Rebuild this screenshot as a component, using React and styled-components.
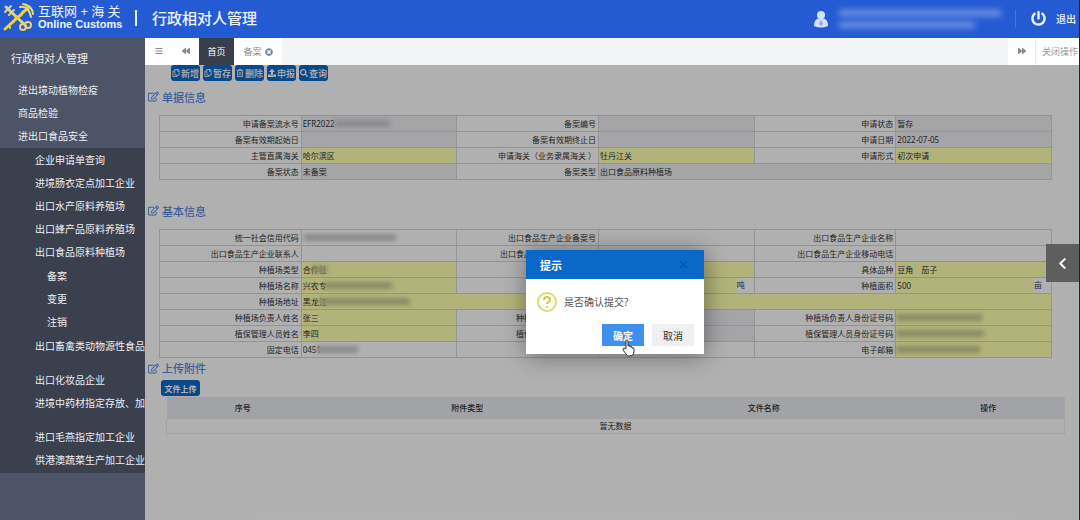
import React from 'react';
import styled, { createGlobalStyle } from 'styled-components';
import { FaBars, FaBackward, FaForward, FaTimesCircle, FaPowerOff, FaRegTrashAlt, FaUpload, FaSearch, FaRegEdit, FaRegCopy, FaChevronLeft } from 'react-icons/fa';

const menu = ['进出境动植物检疫', '商品检验', '进出口食品安全'];

const subMenu = [
  { name: '企业申请单查询' },
  { name: '进境肠衣定点加工企业' },
  { name: '出口水产原料养殖场' },
  { name: '出口蜂产品原料养殖场' },
  { name: '出口食品原料种植场', children: ['备案', '变更', '注销'] },
  { name: '出口畜禽类动物源性食品企业', tall: true },
  { name: '出口化妆品企业' },
  { name: '进境中药材指定存放、加工企业', tall: true },
  { name: '进口毛燕指定加工企业' },
  { name: '供港澳蔬菜生产加工企业' },
];

const tools = [
  { name: '新增', icon: <FaRegCopy /> },
  { name: '暂存', icon: <FaRegCopy /> },
  { name: '删除', icon: <FaRegTrashAlt /> },
  { name: '申报', icon: <FaUpload /> },
  { name: '查询', icon: <FaSearch /> },
];

const billFields = [
  { label: '申请备案流水号', value: 'EFR2022', tone: 'grey', hide: [32, 56] },
  { label: '备案编号', tone: 'grey' },
  { label: '申请状态', value: '暂存', tone: 'grey' },
  { label: '备案有效期起始日', tone: 'grey' },
  { label: '备案有效期终止日', tone: 'grey' },
  { label: '申请日期', value: '2022-07-05', tone: 'grey' },
  { label: '主管直属海关', value: '哈尔滨区', tone: 'yellow' },
  { label: '申请海关（业务隶属海关 ）', value: '牡丹江关', tone: 'yellow' },
  { label: '申请形式', value: '初次申请', tone: 'yellow' },
  { label: '备案状态', value: '未备案', tone: 'grey' },
  { label: '备案类型', value: '出口食品原料种植场', tone: 'grey', span: 3 },
];

const baseFields = [
  { label: '统一社会信用代码', hide: [2, 92] },
  { label: '出口食品生产企业备案号' },
  { label: '出口食品生产企业名称' },
  { label: '出口食品生产企业联系人' },
  { label: '出口食品生产企业联系电话' },
  { label: '出口食品生产企业移动电话' },
  { label: '种植场类型', value: '合作社', tone: 'yellow', hide: [10, 15] },
  { label: '种植品种', tone: 'yellow' },
  { label: '具体品种', value: '豆角　茄子', tone: 'yellow' },
  { label: '种植场名称', value: '兴农专', tone: 'yellow', hide: [22, 68] },
  { label: '年产量', tone: 'yellow', unit: '吨' },
  { label: '种植面积', value: '500', tone: 'yellow', unit: '亩' },
  { label: '种植场地址', value: '黑龙江', tone: 'yellow', span: 5, hide: [18, 90] },
  { label: '种植场负责人姓名', value: '张三', tone: 'yellow' },
  { label: '种植场负责人联系电话', tone: 'grey' },
  { label: '种植场负责人身份证号码', tone: 'yellow', hide: [0, 86] },
  { label: '植保管理人员姓名', value: '李四', tone: 'yellow' },
  { label: '植保管理人员联系电话', tone: 'grey' },
  { label: '植保管理人员身份证号码', tone: 'yellow', hide: [0, 88] },
  { label: '固定电话', value: '0451', hide: [14, 42] },
  { label: '传真' },
  { label: '电子邮箱', tone: 'yellow', hide: [0, 84] },
];

const tones = { grey: '#ececf0', yellow: '#ffffb0' };

function FieldGrid({ id, fields }) {
  return (
    <Fields>
      {fields.map((f, i) => (
        <React.Fragment key={f.label}>
          <Label htmlFor={id + i}>{f.label}</Label>
          <Value $span={f.span}>
            <Input id={id + i} $tone={f.tone} defaultValue={f.value || ''} />
            {f.unit && <Unit>{f.unit}</Unit>}
            {f.hide && <Smudge $left={f.hide[0]} $width={f.hide[1]} $tone={f.tone} />}
          </Value>
        </React.Fragment>
      ))}
    </Fields>
  );
}

function Logo() {
  return (
    <svg width="32" height="30" viewBox="0 0 32 30" fill="none" strokeLinecap="round">
      <path d="M4 5 L23 23" stroke="#e3d48a" strokeWidth="3" />
      <path d="M3 10 L9 4 M7 13 L12 8" stroke="#e3d48a" strokeWidth="2" />
      <circle cx="21" cy="25" r="3" stroke="#ead36a" strokeWidth="2" />
      <circle cx="26" cy="23" r="3" stroke="#ead36a" strokeWidth="2" />
      <path d="M3 27 L26 6" stroke="#f2cf35" strokeWidth="3" />
      <path d="M8 26 C6 20 13 22 13 17 C14 12 20 17 20 11 C21 7 25 10 26 5" stroke="#f2cf35" strokeWidth="2" />
      <path d="M18 5 C23 4 27 6 29 15 M21 2 C27 3 31 7 31 12" stroke="#e8d98c" strokeWidth="2" />
      <circle cx="26" cy="5" r="2" fill="#f2cf35" />
    </svg>
  );
}

export default function App() {
  return (
    <Page>
      <GlobalStyle />
      <Header>
        <Brand>
          <Logo />
          <BrandText>
            <span>互联网 + 海 关</span>
            <b>Online Customs</b>
          </BrandText>
        </Brand>
        <Title>行政相对人管理</Title>
        <User>
          <svg width="14" height="18" viewBox="0 0 14 18" fill="#d3e2fb">
            <circle cx="7" cy="5" r="4" />
            <path d="M0 16 C0 10 3 8 7 8 C11 8 14 10 14 16 Q7 19 0 16Z" />
            <path d="M7 10 L9 14 L7 16 L5 14Z" fill="#8aa9e8" />
          </svg>
          <UserLines>
            <i />
            <i />
          </UserLines>
        </User>
        <Logout type="button">
          <FaPowerOff />
          退出
        </Logout>
      </Header>

      <Body>
        <Sidebar>
          <SideTitle>行政相对人管理</SideTitle>
          <MenuList>
            {menu.map((name) => (
              <li key={name}><MenuLink href="#" $indent={18}>{name}</MenuLink></li>
            ))}
          </MenuList>
          <SubList>
            {subMenu.map((item) => (
              <li key={item.name}>
                <MenuLink href="#" $indent={35} $tall={item.tall}>{item.name}</MenuLink>
                {item.children && (
                  <NestedList>
                    {item.children.map((name) => (
                      <li key={name}><MenuLink href="#" $indent={47}>{name}</MenuLink></li>
                    ))}
                  </NestedList>
                )}
              </li>
            ))}
          </SubList>
        </Sidebar>

        <Main>
          <Tabs>
            <TabIcon type="button" aria-label="菜单"><FaBars /></TabIcon>
            <TabIcon type="button" aria-label="向左"><FaBackward /></TabIcon>
            <Tab type="button" $active>首页</Tab>
            <Tab type="button">备案 <FaTimesCircle /></Tab>
            <TabFill />
            <TabIcon type="button" aria-label="向右"><FaForward /></TabIcon>
            <CloseMenu type="button">关闭操作</CloseMenu>
          </Tabs>

          <Content>
            <Toolbar>
              {tools.map((t) => (
                <ToolButton type="button" key={t.name}>{t.icon}{t.name}</ToolButton>
              ))}
            </Toolbar>

            <Section>
              <Heading><FaRegEdit />单据信息</Heading>
              <FieldGrid id="bill" fields={billFields} />
            </Section>

            <Section>
              <Heading><FaRegEdit />基本信息</Heading>
              <FieldGrid id="base" fields={baseFields} />
            </Section>

            <Heading $compact><FaRegEdit />上传附件</Heading>
            <UploadRow>
              <ToolButton type="button" $wide>文件上传</ToolButton>
            </UploadRow>
            <FileTable>
              <thead>
                <tr>
                  <Th $width="17%">序号</Th>
                  <Th $width="33%">附件类型</Th>
                  <Th $width="33%">文件名称</Th>
                  <Th $width="17%">操作</Th>
                </tr>
              </thead>
              <tbody>
                <tr><Td colSpan="4">暂无数据</Td></tr>
              </tbody>
            </FileTable>

            <Backdrop>
              <Dialog role="dialog" aria-labelledby="dialog-title">
                <DialogHead>
                  <h2 id="dialog-title">提示</h2>
                  <CloseButton type="button" aria-label="关闭">
                    <svg width="9" height="9" viewBox="0 0 9 9" stroke="#123c70" strokeWidth="1">
                      <path d="M1 1 L8 8 M8 1 L1 8" />
                    </svg>
                  </CloseButton>
                </DialogHead>
                <Message>
                  <svg width="22" height="22" viewBox="0 0 22 22" fill="none">
                    <circle cx="11" cy="11" r="9" stroke="#dcdc6c" strokeWidth="2" />
                    <path d="M8 9 C8 5 14 5 14 9 C14 11 11 11 11 13" stroke="#cfc93a" strokeWidth="2" />
                    <circle cx="11" cy="16" r="1" fill="#cfc93a" />
                  </svg>
                  是否确认提交?
                </Message>
                <Actions>
                  <ActionButton type="button" $primary>
                    确定
                    <Pointer width="13" height="18" viewBox="0 0 13 18">
                      <path
                        d="M4 10 V2 Q4 1 5 1 Q6 1 6 2 V7 Q7 6 8 7 L8 8 Q9 7 10 8 V9 Q12 8 12 10 V13 Q12 17 8 17 H7 Q5 17 4 15 L1 11 Q1 9 2 9 Z"
                        fill="#fff"
                        stroke="#333"
                      />
                    </Pointer>
                  </ActionButton>
                  <ActionButton type="button">取消</ActionButton>
                </Actions>
              </Dialog>
            </Backdrop>
            <SideToggle type="button" aria-label="展开"><FaChevronLeft /></SideToggle>
          </Content>
        </Main>
      </Body>
    </Page>
  );
}

const GlobalStyle = createGlobalStyle`
* {
  box-sizing: border-box;
}
body {
  margin: 0;
  font-family: "Noto Sans", "Noto Sans CJK SC", sans-serif;
  font-size: 10px;
  color: #333;
}
button, input {
  font-family: inherit;
  border: 0;
  padding: 0;
}
ul {
  list-style: none;
  margin: 0;
  padding: 0;
}
`;

const Page = styled.div`
  min-height: 100vh;
  display: flex;
  flex-direction: column;
  border-right: 1px solid #1c2430;
  overflow: hidden;
`;

const Header = styled.header`
  height: 38px;
  display: flex;
  align-items: center;
  background: #255bd2;
  color: #f0f5ff;
`;

const Brand = styled.div`
  display: flex;
  align-items: center;
  gap: 4px;
  padding: 0 13px 4px 2px;
`;

const BrandText = styled.div`
  width: 84px;
  white-space: nowrap;
  span, b {
    display: block;
  }
  span {
    font-size: 13px;
    line-height: 14px;
  }
  b {
    font-family: "Liberation Sans", sans-serif;
    font-size: 11px;
    line-height: 12px;
  }
`;

const Title = styled.h1`
  margin: 0 0 2px;
  padding-left: 15px;
  border-left: 2px solid #e6eeff;
  font-size: 15px;
  font-weight: 500;
  line-height: 16px;
`;

const User = styled.div`
  display: flex;
  align-items: center;
  gap: 11px;
  margin-left: auto;
  padding-right: 14px;
  border-right: 1px solid #4674da;
`;

const UserLines = styled.div`
  display: flex;
  flex-direction: column;
  gap: 6px;
  i {
    width: 162px;
    height: 6px;
    background: #7397e4;
    filter: blur(3px);
  }
  i + i {
    width: 136px;
  }
`;

const Logout = styled.button`
  display: flex;
  align-items: center;
  gap: 10px;
  margin: 0 3px 2px 15px;
  background: none;
  color: #f0f5ff;
  font-size: 10px;
  font-weight: 500;
  svg {
    font-size: 15px;
  }
`;

const Body = styled.div`
  flex: 1;
  display: flex;
`;

const Sidebar = styled.nav`
  flex: 0 0 145px;
  width: 145px;
  background: #4e5467;
  color: #eceef3;
  overflow: hidden;
`;

const SideTitle = styled.div`
  padding-left: 11px;
  font-size: 11px;
  line-height: 41px;
`;

const MenuList = styled.ul``;

const SubList = styled.ul`
  && {
    padding: 1px 0;
  }
  background: #3b404e;
`;

const NestedList = styled.ul`
  && {
    padding: 1px 0;
  }
`;

const MenuLink = styled.a`
  display: block;
  height: ${(p) => (p.$tall ? 34 : 23)}px;
  padding-left: ${(p) => p.$indent}px;
  line-height: 23px;
  color: inherit;
  text-decoration: none;
  white-space: nowrap;
  overflow: hidden;
`;

const Main = styled.main`
  flex: 1;
  min-width: 0;
  display: flex;
  flex-direction: column;
`;

const Tabs = styled.div`
  display: flex;
  height: 27px;
  background: #fff;
`;

const TabIcon = styled.button`
  width: 27px;
  background: none;
  color: #888;
  font-size: 8px;
`;

const Tab = styled.button`
  display: flex;
  align-items: center;
  justify-content: center;
  gap: 3px;
  width: ${(p) => (p.$active ? 35 : 48)}px;
  background: ${(p) => (p.$active ? '#383e4b' : '#fff')};
  color: ${(p) => (p.$active ? '#fff' : '#8b8b8b')};
  font-size: 9px;
  svg {
    color: #7889a4;
    font-size: 8px;
  }
`;

const TabFill = styled.div`
  flex: 1;
  background: #f2f4f6;
`;

const CloseMenu = styled.button`
  width: 44px;
  padding-left: 6px;
  border-left: 1px solid #eee;
  background: none;
  color: #999;
  font-size: 9px;
  text-align: left;
  white-space: nowrap;
`;

const Content = styled.div`
  position: relative;
  flex: 1;
  background: #fdfdfd;
`;

const Toolbar = styled.div`
  display: flex;
  gap: 3px;
  padding-left: 26px;
`;

const ToolButton = styled.button`
  display: flex;
  align-items: center;
  justify-content: center;
  gap: 1px;
  width: ${(p) => (p.$wide ? 39 : 29)}px;
  height: 16px;
  border-radius: 3px;
  background: #0f69c4;
  color: #fff;
  font-size: ${(p) => (p.$wide ? 8 : 9)}px;
  font-weight: ${(p) => (p.$wide ? 700 : 500)};
  white-space: nowrap;
  svg {
    font-size: 8px;
  }
`;

const Section = styled.section`
  margin-bottom: 15px;
  & + & {
    margin-bottom: 0;
  }
`;

const Heading = styled.h3`
  display: flex;
  align-items: center;
  gap: 3px;
  margin: 0;
  padding-left: 3px;
  height: ${(p) => (p.$compact ? 22 : 34)}px;
  padding-bottom: ${(p) => (p.$compact ? 2 : 3)}px;
  color: #5688e0;
  font-size: 11px;
  font-weight: 500;
`;

const Fields = styled.div`
  display: grid;
  grid-template-columns: repeat(3, 142fr 156fr);
  grid-auto-rows: 16px;
  margin: 0 27px 0 14px;
  border: solid #d4d4d4;
  border-width: 0 1px 1px 0;
  font-size: 8px;
`;

const Label = styled.label`
  border: solid #d4d4d4;
  border-width: 1px 0 0 1px;
  padding-right: 2px;
  line-height: 15px;
  text-align: right;
  white-space: nowrap;
  overflow: hidden;
`;

const Value = styled.div`
  position: relative;
  display: flex;
  min-width: 0;
  grid-column: span ${(p) => p.$span || 1};
  border: solid #d4d4d4;
  border-width: 1px 0 0 1px;
`;

const Input = styled.input`
  flex: 1;
  min-width: 0;
  padding-left: 1px;
  background: ${(p) => tones[p.$tone] || 'transparent'};
  color: #333;
  font-size: 8px;
`;

const Unit = styled.span`
  width: 17px;
  line-height: 14px;
`;

const Smudge = styled.span`
  position: absolute;
  top: 4px;
  left: ${(p) => p.$left}px;
  width: ${(p) => p.$width}px;
  height: 7px;
  background: ${(p) => (p.$tone === 'yellow' ? '#c9c992' : '#c8c8cc')};
  filter: blur(2px);
`;

const UploadRow = styled.div`
  padding: 0 0 1px 16px;
`;

const FileTable = styled.table`
  width: calc(100% - 35px);
  margin-left: 21px;
  table-layout: fixed;
  border-collapse: collapse;
  font-size: 8px;
  text-align: center;
`;

const Th = styled.th`
  width: ${(p) => p.$width};
  height: 21px;
  padding: 0;
  background: #e8eaef;
  font-weight: 500;
`;

const Td = styled.td`
  height: 15px;
  padding: 0;
  border: 1px solid #eaeaea;
`;

const Backdrop = styled.div`
  position: absolute;
  inset: 0;
  display: flex;
  align-items: center;
  justify-content: center;
  padding: 19px 0 0 6px;
  background: rgba(0, 0, 0, 0.3);
`;

const Dialog = styled.div`
  width: 178px;
  background: #fff;
  box-shadow: 1px 2px 22px rgba(0, 0, 0, 0.4);
`;

const DialogHead = styled.div`
  display: flex;
  align-items: center;
  justify-content: space-between;
  height: 29px;
  padding: 0 16px 0 14px;
  background: #0a68c9;
  color: #fff;
  h2 {
    margin: 0;
    font-size: 11px;
    font-weight: 700;
  }
`;

const CloseButton = styled.button`
  display: flex;
  background: none;
`;

const Message = styled.div`
  display: flex;
  align-items: center;
  gap: 6px;
  height: 45px;
  padding-left: 10px;
  color: #555;
`;

const Actions = styled.div`
  display: flex;
  justify-content: flex-end;
  gap: 8px;
  padding: 0 10px 8px;
`;

const ActionButton = styled.button`
  position: relative;
  width: 42px;
  height: 22px;
  background: ${(p) => (p.$primary ? '#3d90ec' : '#f0f0f0')};
  color: ${(p) => (p.$primary ? '#fff' : '#333')};
  font-size: 10px;
  font-weight: ${(p) => (p.$primary ? 700 : 400)};
`;

const Pointer = styled.svg`
  position: absolute;
  top: 15px;
  left: 20px;
`;

const SideToggle = styled.button`
  position: absolute;
  top: 179px;
  right: 0;
  display: flex;
  align-items: center;
  justify-content: center;
  width: 33px;
  height: 38px;
  background: #5e5e5e;
  color: #fff;
  font-size: 13px;
`;
